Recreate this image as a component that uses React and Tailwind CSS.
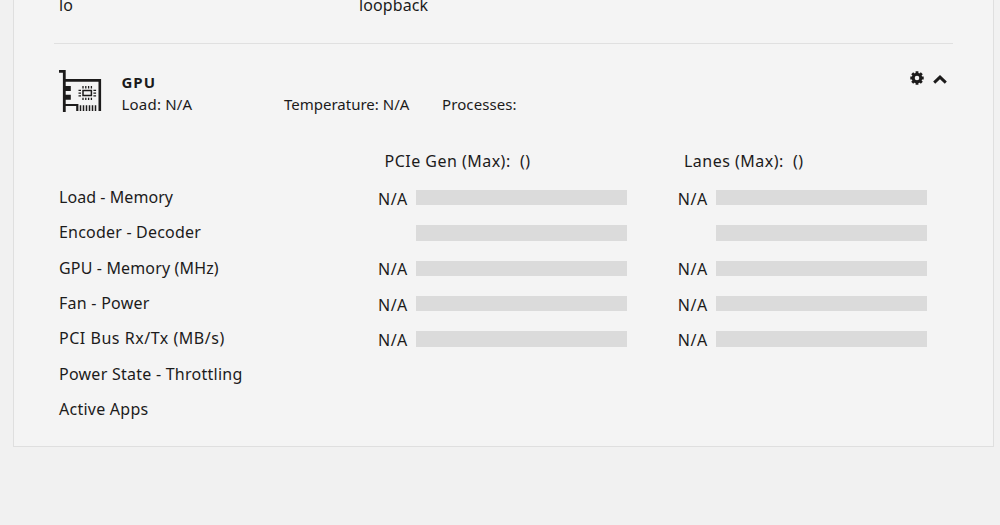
import React from 'react';

const ROWS = [
    { label: 'Load - Memory', tracking: 'tracking-[0.06px]', values: ['N/A', 'N/A'] },
    { label: 'Encoder - Decoder', tracking: 'tracking-[0.2px]', values: ['', ''] },
    { label: 'GPU - Memory (MHz)', tracking: 'tracking-[0.15px]', values: ['N/A', 'N/A'] },
    { label: 'Fan - Power', tracking: 'tracking-[0.25px]', values: ['N/A', 'N/A'] },
    { label: 'PCI Bus Rx/Tx (MB/s)', tracking: 'tracking-[0.53px]', values: ['N/A', 'N/A'] },
    { label: 'Power State - Throttling', tracking: 'tracking-[0.25px]', values: [] },
    { label: 'Active Apps', tracking: 'tracking-[0.25px]', values: [] }
];

// Graphics card with bracket, chip and edge connector
const GpuIcon = () => (
    <svg className="block w-[43px] h-[43px]" viewBox="0 0 43 43" fill="none" stroke="#1c1b1b">
        <path d="M0 1.4H5.3V42" strokeWidth="2.8" />
        <path d="M6 10.4H40.8V41" strokeWidth="2.6" />
        <path d="M6 35H18.3V41" strokeWidth="2.2" />
        <path d="M5 18.4H11.8M5 27.3H11.8" strokeWidth="5" />
        <path d="M21.5 35.3V41M24.5 35.3V41M27.5 35.3V41M30.5 35.3V41M33.5 35.3V41M36.5 35.3V41" strokeWidth="1.5" />
        <rect x="24" y="20.5" width="8.4" height="5" strokeWidth="1.5" />
        <path d="M24 16V18.4M26.8 16V18.4M29.6 16V18.4M32.4 16V18.4M24 27.7V30M26.8 27.7V30M29.6 27.7V30M32.4 27.7V30" strokeWidth="1.3" />
        <path d="M19.5 20.4H22M19.5 23.1H22M19.5 25.8H22M34.4 20.4H37.1M34.4 23.1H37.1M34.4 25.8H37.1" strokeWidth="1.3" />
    </svg>
);

const GearIcon = () => (
    <svg className="block w-[14px] h-[14px]" viewBox="0 0 14 14" fill="none" stroke="#1c1b1b">
        <circle cx="7" cy="7" r="3.8" strokeWidth="3" />
        <path d="M7 0.3V3M7 11V13.7M0.3 7H3M11 7H13.7M2.2 2.2L4 4M10 10L11.8 11.8M11.8 2.2L10 4M4 10L2.2 11.8" strokeWidth="2.8" />
    </svg>
);

const ChevronIcon = () => (
    <svg className="block w-[14px] h-[9px]" viewBox="0 0 14 9" fill="none" stroke="#1c1b1b">
        <path d="M1.2 7.6L7 2.1L12.8 7.6" strokeWidth="2.9" />
    </svg>
);

const Meter = ({ value }) => (
    <div className="flex w-[299.8px] items-center">
        <span className="w-[38px] pt-[2px] tracking-[0.5px]">{value}</span>
        <div className="h-[15.6px] w-[211px] bg-[#dbdbdb]"></div>
    </div>
);

const App = () => {
    return (
        <div className="h-[525px] overflow-hidden bg-[#f1f1f1] pl-[13px] font-['Noto_Sans',sans-serif] text-[16px] leading-5 text-[#1c1b1b]">
            <div className="h-[447px] w-[981px] border-x border-b border-[#dfdfdf] bg-[#f4f4f4]">
                {/* Last interface row */}
                <div className="mx-10 flow-root h-[44px] border-b border-[#e0e0e0]">
                    <div className="-mt-[5px] flex pl-[5px] tracking-[0.1px]">
                        <span className="w-[300px]">lo</span>
                        <span>loopback</span>
                    </div>
                </div>

                {/* Header */}
                <div className="flex h-[106px] pl-[45px] pt-[26px]">
                    <GpuIcon />
                    <div className="ml-[19.5px] pt-[2px] text-[15px]">
                        <div className="h-[21.5px] font-bold tracking-[1px]">GPU</div>
                        <div className="flex">
                            <span className="w-[162.5px] tracking-[0.2px]">Load: N/A</span>
                            <span className="w-[158px]">Temperature: N/A</span>
                            <span className="tracking-[0.1px]">Processes:</span>
                        </div>
                    </div>
                    <div className="ml-auto mr-[46px] flex items-start gap-[9px] pt-[1px]">
                        <GearIcon />
                        <span className="pt-[4px]"><ChevronIcon /></span>
                    </div>
                </div>

                <div className="flex h-[30px] pl-[370.5px] pt-[1px] tracking-[0.48px]">
                    <span className="w-[299.5px] whitespace-pre">PCIe Gen (Max):  ()</span>
                    <span className="whitespace-pre">Lanes (Max):  ()</span>
                </div>

                {/* Metrics */}
                {ROWS.map((row) => (
                    <div key={row.label} className="flex h-[35.33px] items-center pl-[45px]">
                        <span className={`w-[319px] pb-[1px] ${row.tracking}`}>{row.label}</span>
                        {row.values.map((value, i) => (
                            <Meter key={i} value={value} />
                        ))}
                    </div>
                ))}
            </div>
        </div>
    );
};

export default App;
